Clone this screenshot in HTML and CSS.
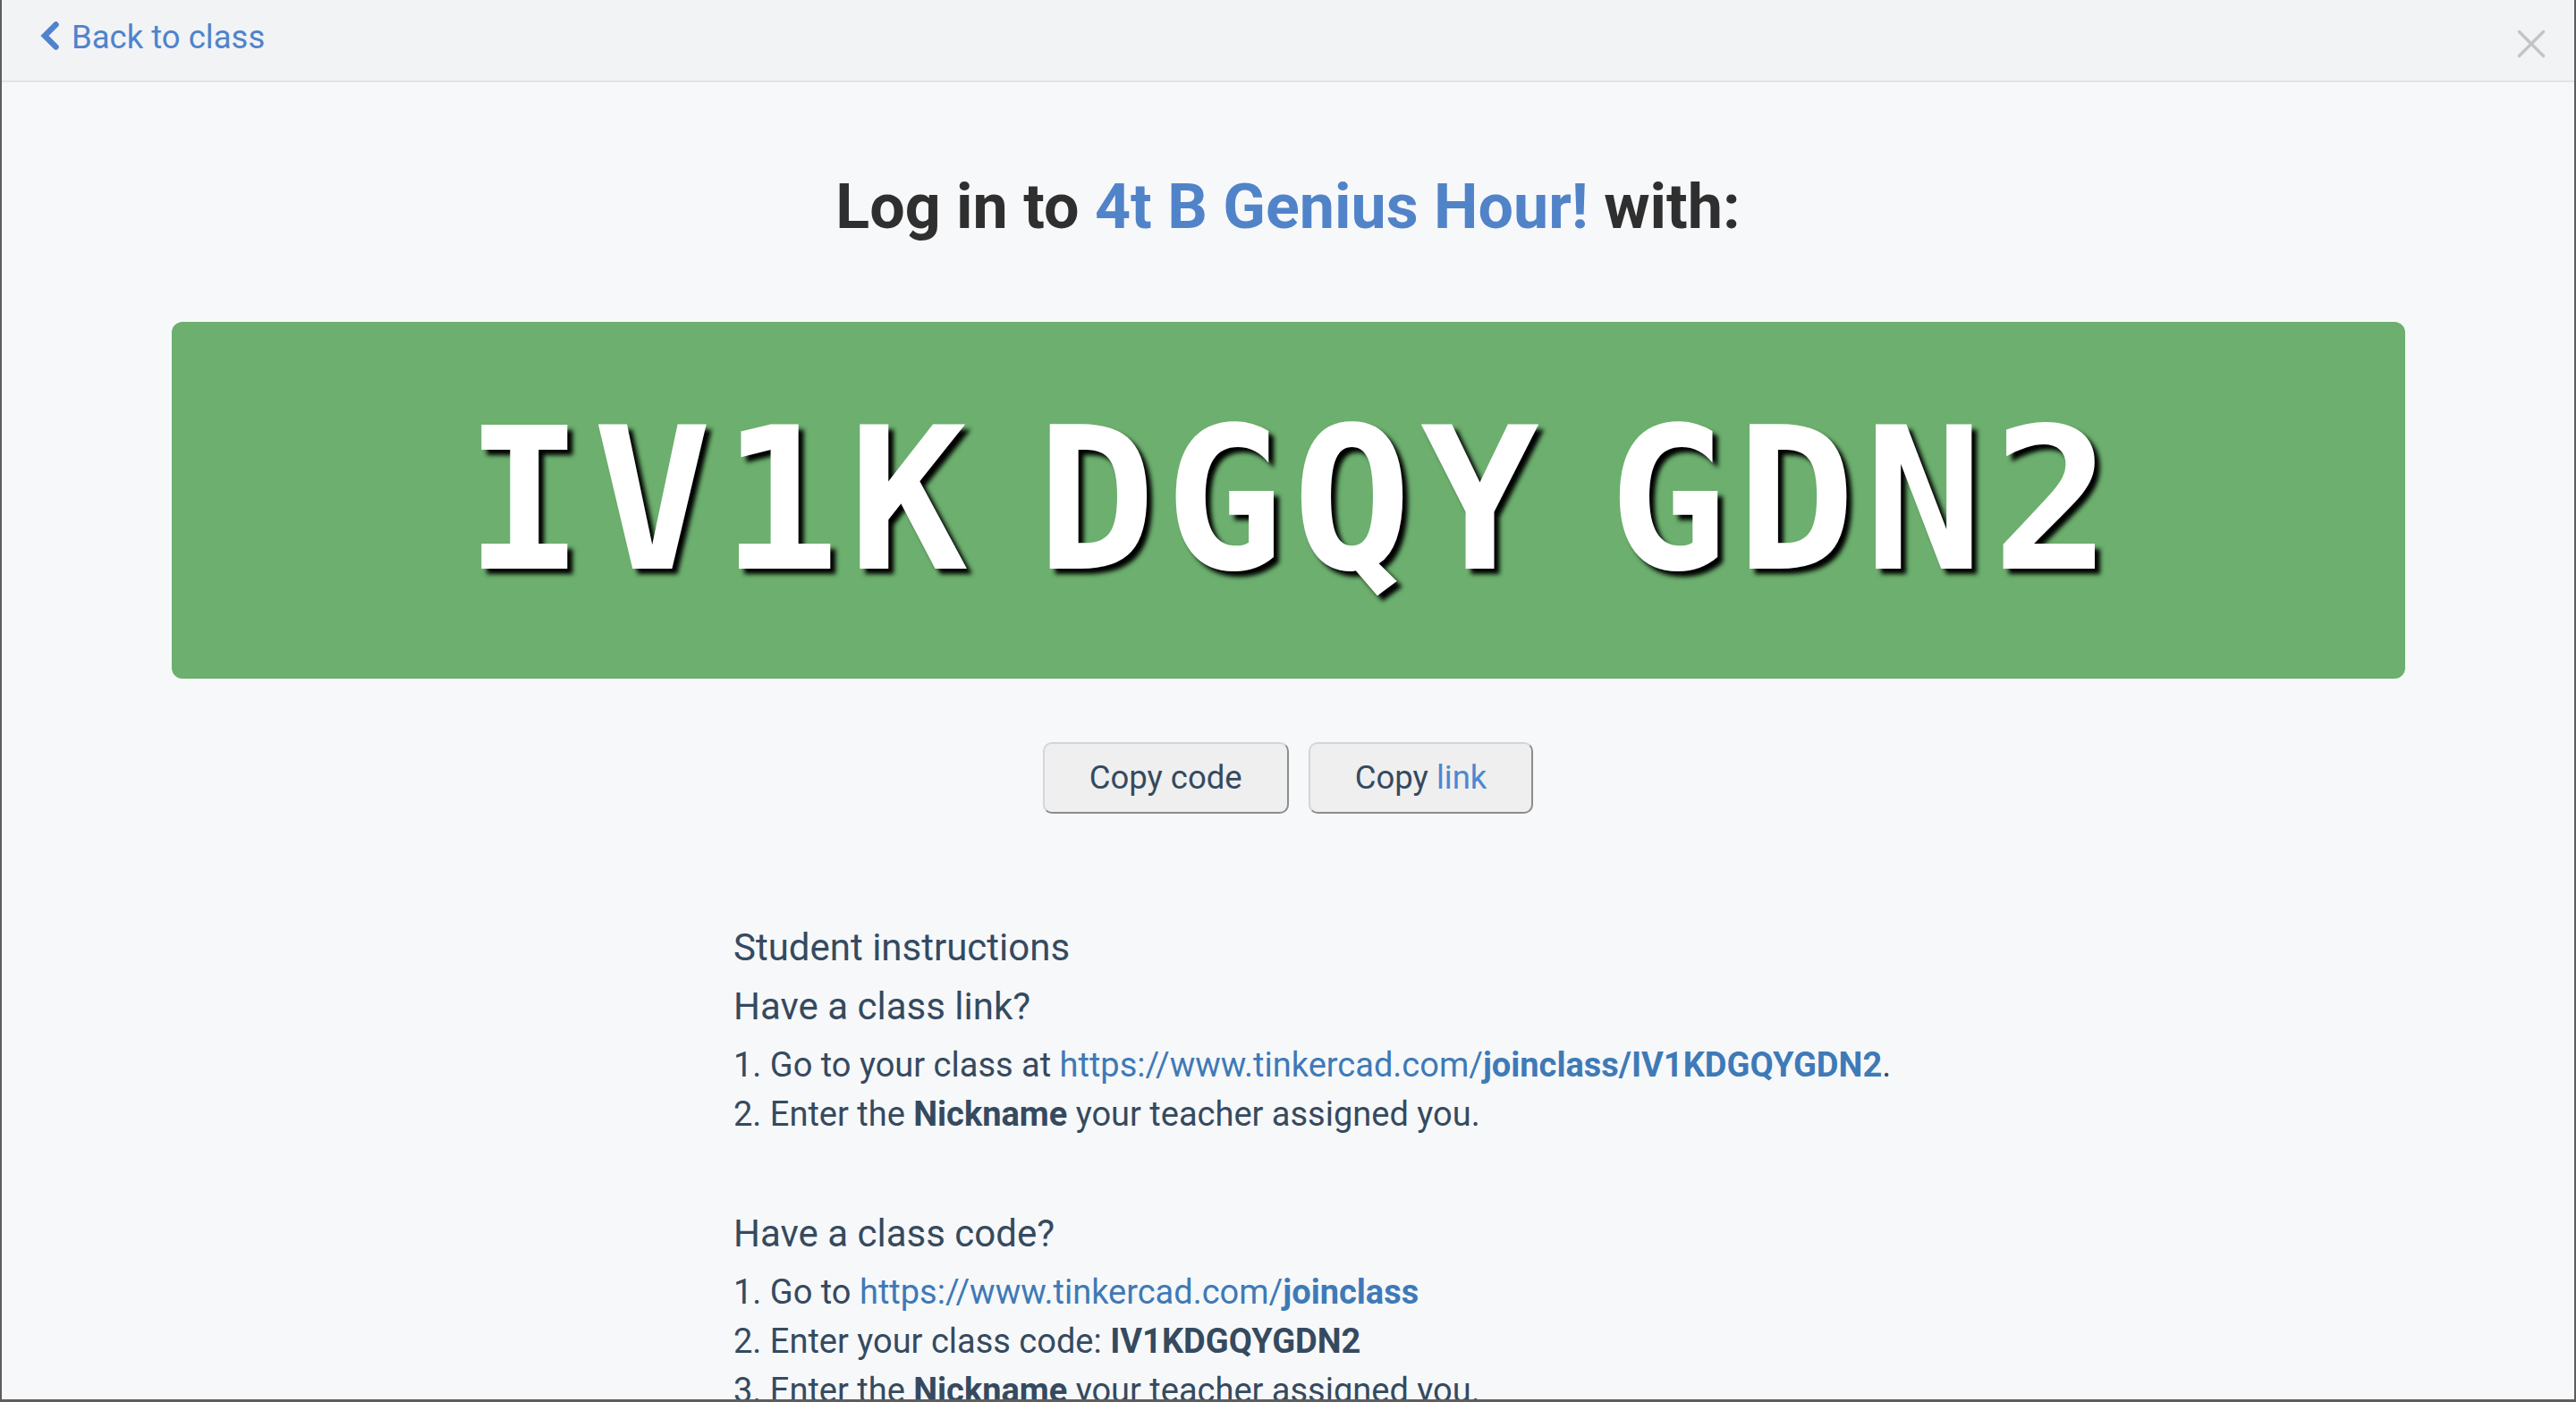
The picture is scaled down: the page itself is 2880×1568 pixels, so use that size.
FILE: index.html
```html
<!DOCTYPE html>
<html lang="en">
<head>
<meta charset="utf-8">
<title>Log in to class</title>
<link rel="stylesheet" href="styles.css">
</head>
<body>
<div class="modal">
  <header class="topbar">
    <a class="back" href="#">
      <svg class="back-icon" viewBox="0 0 22 32" width="22" height="32" aria-hidden="true">
        <path d="M17.5 3.5 L5 16 L17.5 28.5" fill="none" stroke="#4f83cc" stroke-width="6.5" stroke-linecap="round" stroke-linejoin="miter"/>
      </svg>
      <span>Back to class</span>
    </a>
    <button class="close" aria-label="Close">
      <svg viewBox="0 0 32 32" width="32" height="32" aria-hidden="true">
        <path d="M2.5 2.5 L29.5 29.5 M29.5 2.5 L2.5 29.5" fill="none" stroke="#c4c4c4" stroke-width="3.5" stroke-linecap="round"/>
      </svg>
    </button>
  </header>

  <main class="content">
    <h1 class="title">Log in to <span class="class-name">4t B Genius Hour!</span> with:</h1>

    <div class="code-box">
      <span class="code">IV1K DGQY GDN2</span>
    </div>

    <div class="actions">
      <button class="btn">Copy code</button>
      <button class="btn">Copy <span class="btn-accent">link</span></button>
    </div>

    <div class="instructions">
      <h3 class="instr-title">Student instructions</h3>
      <section class="instr-section">
        <h4 class="instr-head">Have a class link?</h4>
        <ol class="steps">
          <li>Go to your class at <a class="link" href="#">https://www.tinkercad.com/<b>joinclass/IV1KDGQYGDN2</b></a>.</li>
          <li>Enter the <b>Nickname</b> your teacher assigned you.</li>
        </ol>
      </section>
      <section class="instr-section second">
        <h4 class="instr-head">Have a class code?</h4>
        <ol class="steps">
          <li>Go to <a class="link" href="#">https://www.tinkercad.com/<b>joinclass</b></a></li>
          <li>Enter your class code: <b>IV1KDGQYGDN2</b></li>
          <li>Enter the <b>Nickname</b> your teacher assigned you.</li>
        </ol>
      </section>
    </div>
  </main>
</div>
</body>
</html>
```

FILE: styles.css
```css
* { box-sizing: border-box; }

html, body {
  margin: 0;
  padding: 0;
  background: #f7f8fa;
}

body {
  font-family: Roboto, "Noto Sans", "Liberation Sans", sans-serif;
  color: #354a5f;
}

.modal {
  width: 2880px;
  height: 1568px;
  border: 2px solid #5e5e5e;
  border-top: none;
  border-bottom-width: 3px;
  overflow: hidden;
  background: #f7f8fa;
}

.topbar {
  height: 92px;
  background: #f2f3f5;
  border-bottom: 2px solid #e1e3e8;
  display: flex;
  align-items: flex-start;
  justify-content: space-between;
  padding: 24px 32px 0 43px;
}

.back {
  display: flex;
  align-items: flex-start;
  gap: 13px;
  color: #4f83cc;
  text-decoration: none;
  font-size: 36.5px;
  line-height: 1;
}

.back-icon { display: block; }

.close {
  margin-top: 9px;
  padding: 0;
  border: none;
  background: none;
  line-height: 0;
}

.content {
  display: flex;
  flex-direction: column;
  align-items: center;
}

.title {
  margin: 104px 0 0;
  font-size: 70px;
  line-height: 1;
  font-weight: 700;
  color: #2f2f2f;
  letter-spacing: 0;
}

.class-name { color: #5183c9; }

.code-box {
  margin-top: 94px;
  width: 2497px;
  height: 399px;
  background: #6caf6e;
  border-radius: 12px;
  display: flex;
  align-items: center;
  justify-content: center;
}

.code {
  font-family: "DejaVu Sans Mono", "Liberation Mono", monospace;
  font-weight: 700;
  font-size: 221px;
  line-height: 1;
  color: #ffffff;
  white-space: pre;
  letter-spacing: 10px;
  word-spacing: -76px;
  text-shadow: 6px 6px 5px #000;
  padding-left: 10px;
}

.actions {
  margin-top: 71px;
  display: flex;
  gap: 22px;
}

.btn {
  font-family: Roboto, "Noto Sans", sans-serif;
  font-size: 36.5px;
  line-height: 1;
  color: #354a5f;
  background: #efefef;
  border: 2px solid;
  border-color: #d3d5da #8c8c8c #8c8c8c #d3d5da;
  border-radius: 10px;
  padding: 19.5px 50px;
}

.btn-accent { color: #4d87d0; }

.instructions {
  width: 1240px;
  margin-top: 117px;
}

.instr-title,
.instr-head {
  margin: 0;
  font-size: 42px;
  line-height: 66px;
  font-weight: 400;
}

.instr-head { margin-bottom: 5px; }

.second { margin-top: 73px; }

.steps {
  margin: 0;
  padding: 0;
  list-style-position: inside;
  font-size: 38px;
  line-height: 55px;
}

.steps li { white-space: nowrap; }

.steps b { font-weight: 700; }

.link {
  color: #3e7ab7;
  text-decoration: none;
}
```
